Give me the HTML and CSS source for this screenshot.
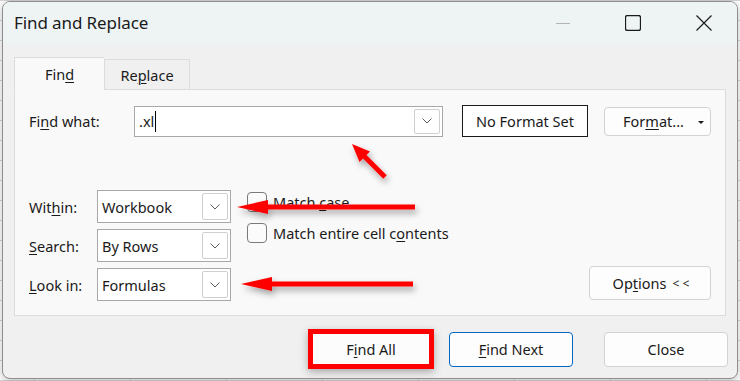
FILE: index.html
```html
<!DOCTYPE html>
<html lang="en">
  <head>
    <meta charset="UTF-8" />
    <meta name="viewport" content="width=device-width, initial-scale=1.0" />
    <title>Find and Replace</title>
    <link rel="stylesheet" href="styles.css">
  </head>

  <body>
    <div class="dialog">
      <div class="titlebar">
        <span class="title">Find and Replace</span>
        <div class="controls">
          <span class="ctl">
            <svg width="16" height="16" viewBox="0 0 16 16"><path d="M2 8.5h14" stroke="#b4b4b4" stroke-width="1" /></svg>
          </span>
          <span class="ctl">
            <svg width="16" height="16" viewBox="0 0 16 16"><rect x="0.5" y="0.5" width="15" height="15" rx="2" fill="none" stroke="#1a1a1a" stroke-width="1.3" /></svg>
          </span>
          <span class="ctl">
            <svg width="16" height="16" viewBox="0 0 16 16"><path d="M0.5 0.5l15 15M15.5 0.5l-15 15" stroke="#1a1a1a" stroke-width="1.2" /></svg>
          </span>
        </div>
      </div>

      <div class="content">
        <div class="tabs">
          <div class="tab active">Fin<u>d</u></div>
          <div class="tab">Re<u>p</u>lace</div>
        </div>

        <div class="panel">
          <div class="find-row">
            <label class="label label-find">Fi<u>n</u>d what:</label>
            <div class="combo combo-text">
              <span class="value">.xl<span class="caret"></span></span>
              <span class="drop"><svg width="10" height="6" viewBox="0 0 10 6"><path d="M0.5 0.5l4.5 4.5 4.5-4.5" fill="none" stroke="#5c5c5c" stroke-width="1" /></svg></span>
            </div>
            <div class="format-box">No Format Set</div>
            <button class="btn btn-format">For<u>m</u>at... <span class="tri"></span></button>
          </div>

          <div class="options">
            <div class="selects">
              <div class="select-row">
                <label class="label label-select">Wit<u>h</u>in:</label>
                <div class="combo combo-select">
                  <span class="value">Workbook</span>
                  <span class="drop"><svg width="10" height="6" viewBox="0 0 10 6"><path d="M0.5 0.5l4.5 4.5 4.5-4.5" fill="none" stroke="#5c5c5c" stroke-width="1" /></svg></span>
                </div>
              </div>
              <div class="select-row">
                <label class="label label-select"><u>S</u>earch:</label>
                <div class="combo combo-select">
                  <span class="value">By Rows</span>
                  <span class="drop"><svg width="10" height="6" viewBox="0 0 10 6"><path d="M0.5 0.5l4.5 4.5 4.5-4.5" fill="none" stroke="#5c5c5c" stroke-width="1" /></svg></span>
                </div>
              </div>
              <div class="select-row">
                <label class="label label-select"><u>L</u>ook in:</label>
                <div class="combo combo-select">
                  <span class="value">Formulas</span>
                  <span class="drop"><svg width="10" height="6" viewBox="0 0 10 6"><path d="M0.5 0.5l4.5 4.5 4.5-4.5" fill="none" stroke="#5c5c5c" stroke-width="1" /></svg></span>
                </div>
              </div>
            </div>

            <div class="checks">
              <div class="check-row"><span class="box"></span><span>Match <u>c</u>ase</span></div>
              <div class="check-row"><span class="box"></span><span>Match entire cell c<u>o</u>ntents</span></div>
            </div>

            <button class="btn btn-options">Op<u>t</u>ions <span class="lt">&lt; &lt;</span></button>
          </div>
        </div>

        <div class="footer">
          <button class="btn btn-action highlight">F<u>i</u>nd All</button>
          <button class="btn btn-action default"><u>F</u>ind Next</button>
          <button class="btn btn-action btn-close">Close</button>
        </div>
      </div>
    </div>

    <svg class="annotations" width="740" height="381" viewBox="0 0 740 381">
      <defs>
        <filter id="shadow" x="-20%" y="-50%" width="140%" height="250%">
          <feDropShadow dx="2" dy="4" stdDeviation="3" flood-color="#000" flood-opacity="0.35" />
        </filter>
      </defs>
      <g fill="#ff0000" filter="url(#shadow)">
        <path d="M385 177L361.5 153.5" stroke="#ff0000" stroke-width="5" />
        <polygon points="352,144 370,151.5 359.5,162" />
        <rect x="262" y="204.5" width="153" height="5" />
        <polygon points="237,207 268,200 268,214" />
        <rect x="266" y="281.5" width="147" height="5" />
        <polygon points="241,284 272,277 272,291" />
      </g>
    </svg>
  </body>
</html>
```

FILE: styles.css
```css
* {
  margin: 0;
  padding: 0;
  box-sizing: border-box;
}

body {
  font-family: "Noto Sans", sans-serif;
  font-size: 14.5px;
  color: #1a1a1a;
  width: 740px;
  height: 381px;
  overflow: hidden;
  position: relative;
  background-color: #ffffff;
  background-image:
    linear-gradient(to right, #d6d6d6 1px, transparent 1px),
    linear-gradient(to bottom, #d6d6d6 1px, transparent 1px);
  background-size: 96px 20px;
  background-position: 34px 0;
}

u {
  text-decoration-thickness: 1px;
  text-underline-offset: 2px;
}

.dialog {
  margin: 1px 0 0 2px;
  width: 736px;
  height: 378px;
  border: 1px solid #8e8e8e;
  border-radius: 8px;
  overflow: hidden;
  background-color: #f0f0f0;
  box-shadow: 0 2px 8px rgba(0, 0, 0, 0.25);
  display: flex;
  flex-direction: column;
}

.titlebar {
  height: 42px;
  flex: 0 0 42px;
  background-color: #eef4f4;
  display: flex;
  align-items: center;
  padding-left: 11px;
}

.title {
  font-size: 17px;
  letter-spacing: -0.1px;
  padding-bottom: 1px;
}

.controls {
  margin-left: auto;
  display: flex;
  align-items: center;
  padding-right: 25px;
  gap: 55px;
}

.ctl {
  display: flex;
}

.content {
  padding: 13px 9px 0 11px;
}

.tabs {
  display: flex;
  align-items: flex-end;
}

.tab {
  height: 31px;
  width: 86px;
  margin-bottom: -1px;
  border: 1px solid #dcdcdc;
  background-color: #f0f0f0;
  display: flex;
  align-items: center;
  justify-content: center;
  padding-top: 1px;
}

.tab.active {
  height: 33px;
  width: 90px;
  background-color: #f9f9f9;
  border-bottom-color: #f9f9f9;
  border-right: none;
  position: relative;
  z-index: 1;
  padding-top: 0;
}

.panel {
  width: 712px;
  background-color: #f9f9f9;
  border: 1px solid #dcdcdc;
  padding: 15px 14px 14px 14px;
}

.find-row {
  display: flex;
  align-items: center;
  height: 32px;
}

.label {
  flex: 0 0 auto;
}

.label-find {
  width: 105px;
}

.label-select {
  width: 68px;
}

.combo {
  display: flex;
  align-items: center;
  background-color: #ffffff;
  border: 1px solid #a8a8a8;
  padding: 2px 2px 2px 4px;
}

.combo .value {
  flex: 1;
  display: flex;
  align-items: center;
}

.combo-text {
  width: 309px;
  height: 31px;
}

.caret {
  display: inline-block;
  width: 1px;
  height: 21px;
  background-color: #000000;
  margin-left: 1px;
}

.drop {
  width: 26px;
  height: 100%;
  border: 1px solid #cfcfcf;
  border-radius: 2px;
  display: flex;
  align-items: center;
  justify-content: center;
}

.combo-select {
  width: 134px;
  height: 33px;
}

.format-box {
  margin-left: 19px;
  width: 126px;
  height: 32px;
  border: 1px solid #1a1a1a;
  background-color: #ffffff;
  display: flex;
  align-items: center;
  justify-content: center;
}

.btn {
  font-family: "Noto Sans", sans-serif;
  font-size: 14.5px;
  color: #1a1a1a;
  background-color: #fdfdfd;
  border: 1px solid #d2d2d2;
  border-radius: 4px;
  display: flex;
  align-items: center;
  justify-content: center;
}

.btn-format {
  margin-left: 16px;
  width: 107px;
  height: 29px;
  position: relative;
  padding-right: 8px;
}

.tri {
  position: absolute;
  right: 6px;
  top: 13px;
  border-left: 3px solid transparent;
  border-right: 3px solid transparent;
  border-top: 3px solid #1a1a1a;
}

.options {
  margin-top: 53px;
  display: flex;
}

.selects {
  display: flex;
  flex-direction: column;
  gap: 6px;
}

.select-row {
  display: flex;
  align-items: center;
}

.checks {
  margin-left: 16px;
  padding-top: 2px;
  display: flex;
  flex-direction: column;
  gap: 11px;
}

.check-row {
  display: flex;
  align-items: center;
  gap: 6px;
  height: 20px;
}

.box {
  width: 20px;
  height: 20px;
  border: 1px solid #7a7a7a;
  border-radius: 4px;
  background-color: #fbfbfb;
}

.btn-options {
  margin-left: auto;
  align-self: flex-end;
  margin-bottom: 1px;
  width: 122px;
  height: 34px;
  padding-left: 2px;
}

.lt {
  margin-left: 6px;
  font-size: 12px;
}

.footer {
  display: flex;
  justify-content: flex-end;
  align-items: center;
  padding-top: 13px;
  height: 53px;
}

.btn-action {
  width: 124px;
  height: 35px;
  margin-left: 31px;
}

.btn-action.default {
  margin-left: 15px;
  border-color: #0067c0;
}

.btn-action.highlight {
  width: 126px;
  height: 40px;
  border: 5px solid #ff0000;
  border-radius: 0;
  background-color: #fcfcfc;
  box-shadow: 0 3px 8px rgba(0, 0, 0, 0.3);
}

.annotations {
  position: absolute;
  left: 0;
  top: 0;
  pointer-events: none;
}
```
